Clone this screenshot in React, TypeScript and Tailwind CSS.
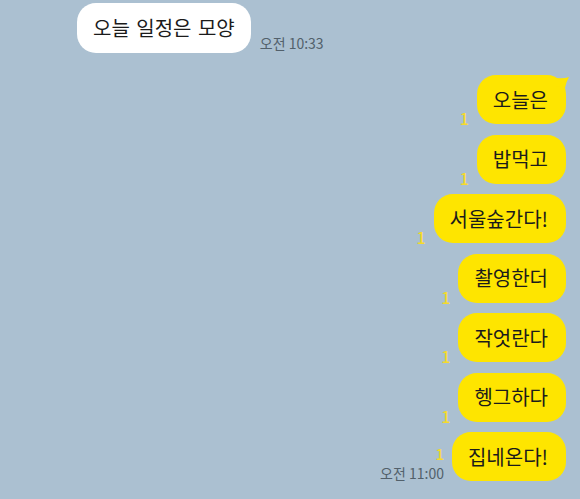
const font = { fontFamily: '"Noto Sans CJK KR", "Noto Sans", sans-serif' };

type Msg = { text: string; first?: boolean; time?: string };

const sent: Msg[] = [
  { text: "오늘은", first: true },
  { text: "밥먹고" },
  { text: "서울숲간다!" },
  { text: "촬영한더" },
  { text: "작엇란다" },
  { text: "헹그하다" },
  { text: "집네온다!", time: "오전 11:00" },
];

function SentBubble({ msg }: { msg: Msg }) {
  return (
    <div className="flex items-end justify-end gap-[8px]">
      <div className="flex flex-col items-end">
        <span
          className={
            msg.time
              ? "mb-[4px] text-[15px] font-medium leading-[14px] text-[#f5da2c]"
              : "mb-[-1px] text-[16px] font-medium leading-[14px] text-[#f5da2c]"
          }
        >
          1
        </span>
        {msg.time && (
          <span className="text-[14px] leading-[16px] text-[#52606b]">{msg.time}</span>
        )}
      </div>
      <div className="relative">
        <div className="flex h-[49px] items-center rounded-[19px] bg-[#fee500] pl-[16px] pr-[18px] text-[20px] text-[#1b1b1b]">
          {msg.text}
        </div>
        {msg.first && (
          <svg
            className="absolute right-[-4px] top-[1px]"
            width="14"
            height="14"
            viewBox="0 0 14 14"
          >
            <path d="M0 2 Q8 3 13 1 Q10 6 9 12 L0 10 Z" fill="#fee500" />
          </svg>
        )}
      </div>
    </div>
  );
}

export default function App() {
  return (
    <div className="h-[499px] w-[580px] overflow-hidden bg-[#abc0d1]" style={font}>
      <div className="flex items-end gap-[9px] pl-[77px] pt-[3px]">
        <div className="flex h-[50px] items-center rounded-[19px] bg-white px-[16px] text-[20px] text-[#1b1b1b] [word-spacing:2px]">
          오늘 일정은 모양
        </div>
        <span className="pb-[2px] text-[14px] leading-[16px] text-[#52606b]">오전 10:33</span>
      </div>
      <div className="mt-[22px] flex flex-col gap-[10.5px] pr-[14px]">
        {sent.map((m) => (
          <SentBubble key={m.text} msg={m} />
        ))}
      </div>
    </div>
  );
}
